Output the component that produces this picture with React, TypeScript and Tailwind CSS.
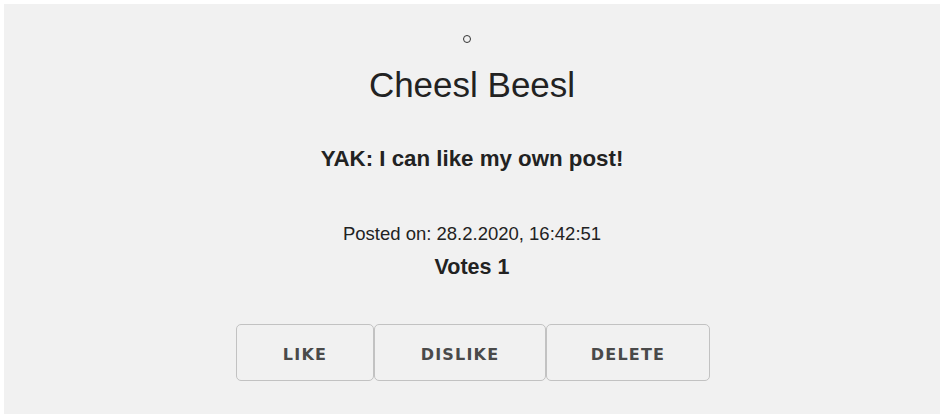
import React from 'react';

const btn =
  "h-[57px] pt-[5px] border border-[#c2c2c2] rounded-[5px] text-[#4a4a4a] font-['DejaVu_Sans',Verdana,sans-serif] font-bold text-[16px] tracking-[1.2px]";

const Post = () => {
  return (
    <div className="ml-[4px] mt-[4px] w-[936px] bg-[#f1f1f1] pt-[31px] pb-[33px] flex flex-col items-center text-[#222] font-['Liberation_Sans',Arial,sans-serif]">
      <div className="w-[8px] h-[8px] rounded-full border border-[#333] mr-[10px]" />
      <h1 className="mt-[22px] text-[35px] leading-[40px]">Cheesl Beesl</h1>
      <h3 className="mt-[40px] text-[22.3px] leading-[28px] font-bold">YAK: I can like my own post!</h3>
      <p className="mt-[49px] text-[18.5px] leading-[24px]">Posted on: 28.2.2020, 16:42:51</p>
      <h3 className="mt-[7px] text-[21.5px] leading-[28px] font-bold">Votes 1</h3>
      <div className="mt-[43px] ml-[2px] flex">
        <button className={`w-[138px] ${btn}`}>LIKE</button>
        <button className={`w-[172px] ${btn}`}>DISLIKE</button>
        <button className={`w-[164px] ${btn}`}>DELETE</button>
      </div>
    </div>
  );
};

export default function App() {
  return (
    <div className="w-[947px] h-[419px] bg-white overflow-hidden">
      <Post />
    </div>
  );
}
